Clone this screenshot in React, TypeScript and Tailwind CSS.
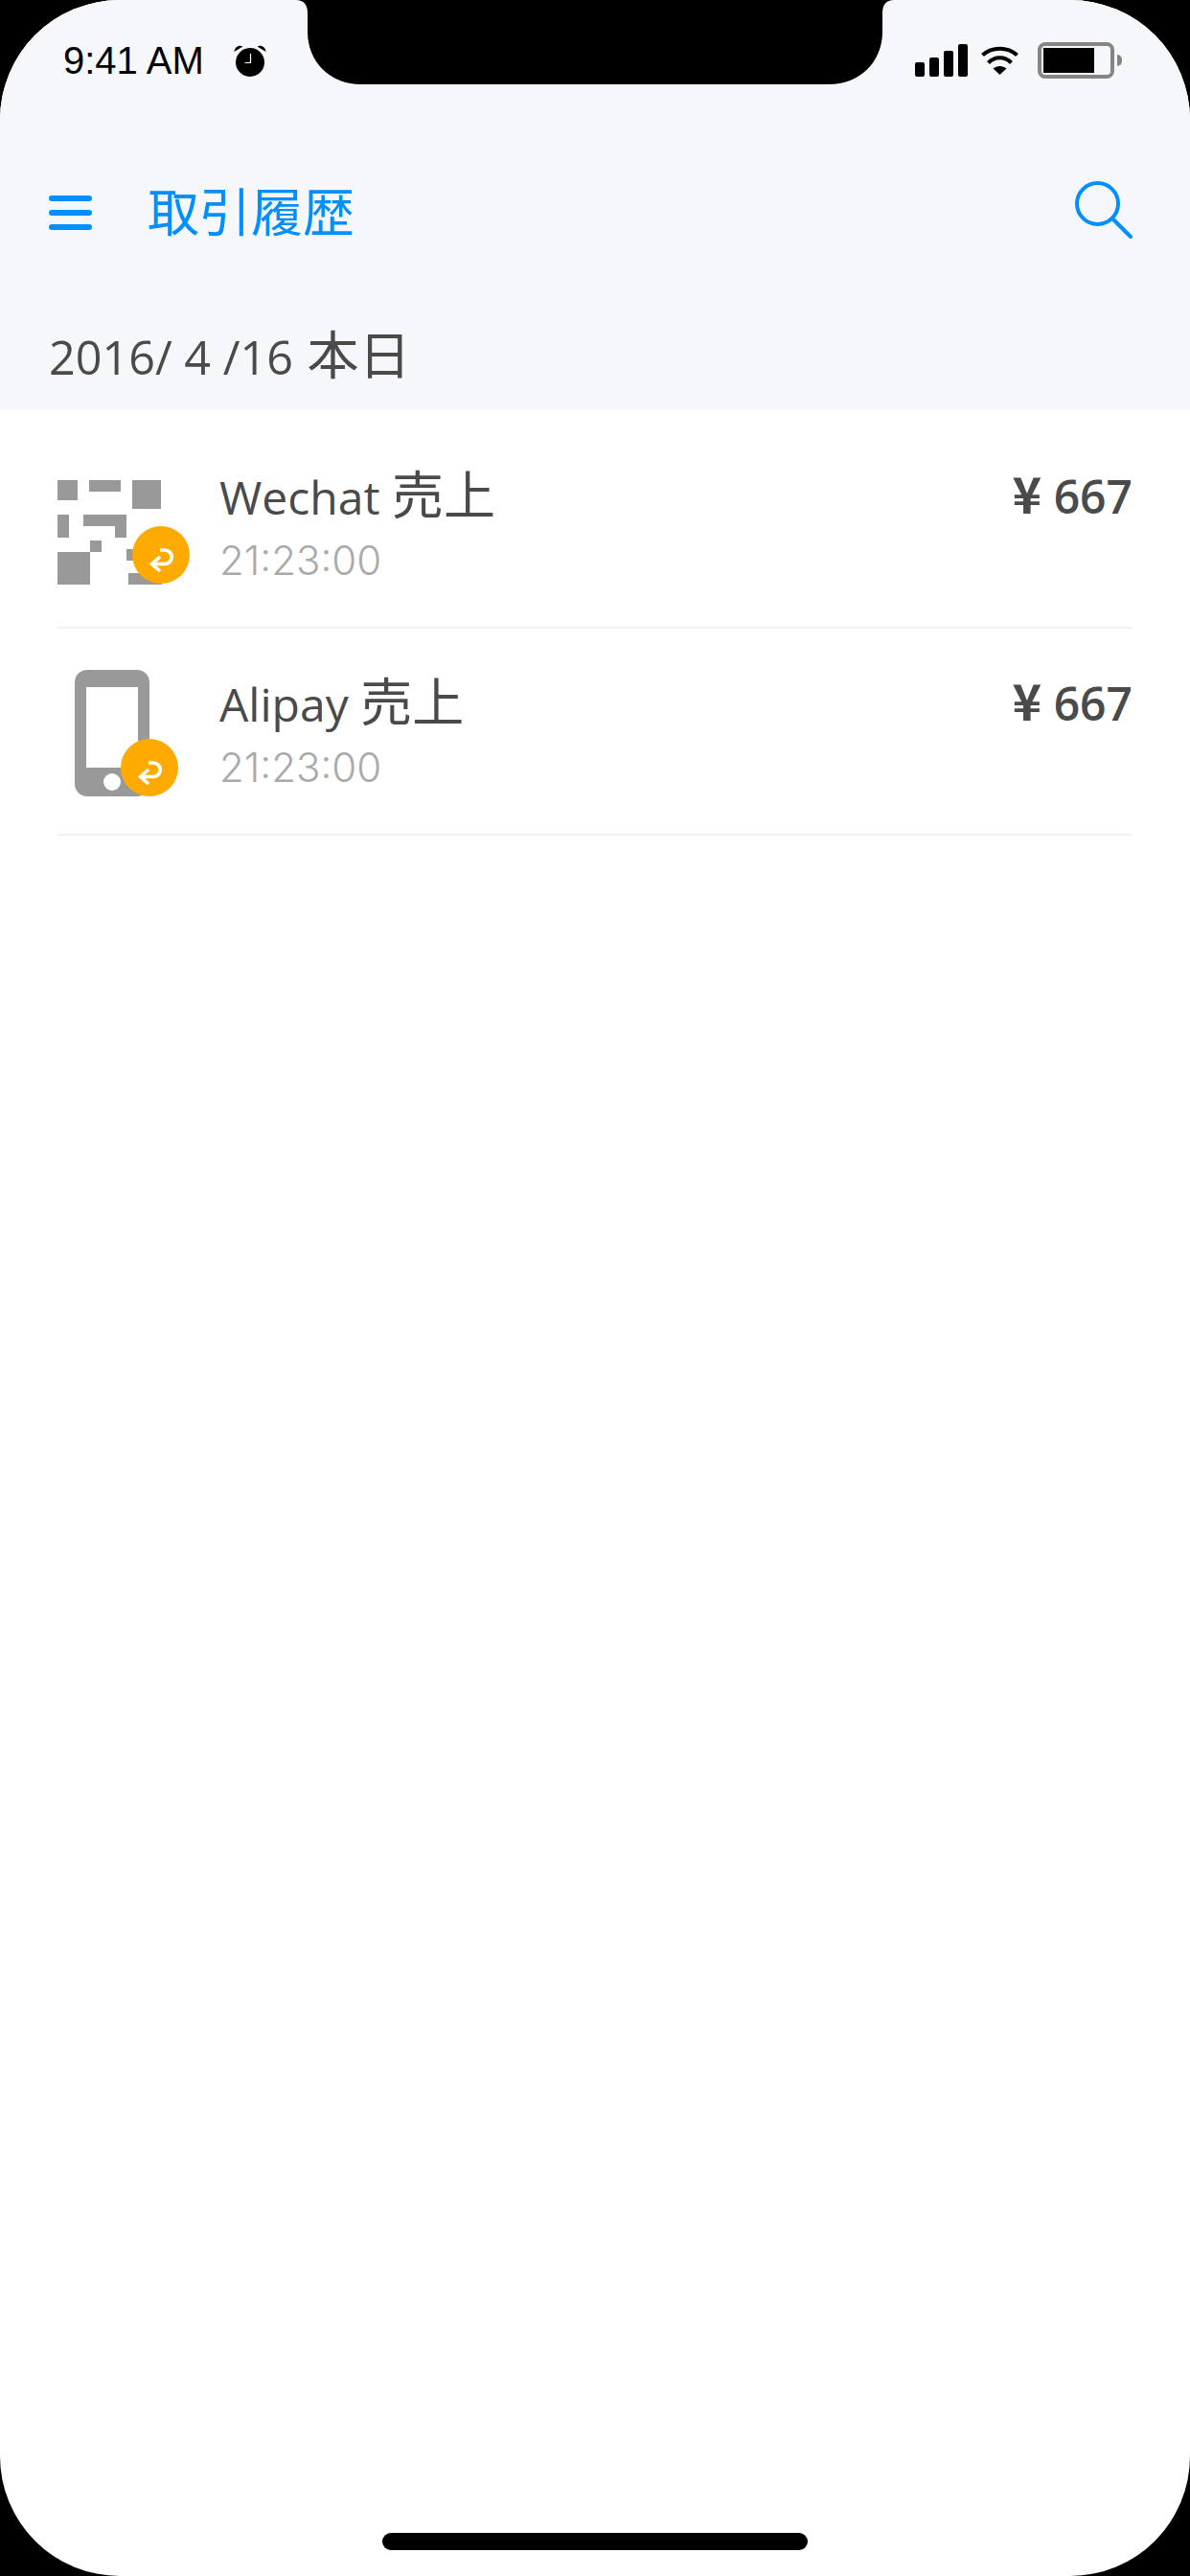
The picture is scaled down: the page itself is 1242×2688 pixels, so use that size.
const SANS = "font-['Open_Sans','Noto_Sans_CJK_JP',sans-serif]";

function ReturnBadge({ className }: { className: string }) {
  return (
    <svg className={`absolute ${className}`} width="60" height="60" viewBox="0 0 60 60">
      <circle cx="30" cy="30" r="30" fill="#ffaa00" />
      <path
        d="M29 32 L20.5 39.5 L29 47 M21 39.5 H34 a7.25 7.25 0 0 0 0 -14.5 H29"
        fill="none"
        stroke="#fff"
        strokeWidth="3.6"
      />
    </svg>
  );
}

function QrIcon() {
  return (
    <svg width="109" height="109" viewBox="60 501 109 109" fill="#999999">
      <rect x="60" y="501" width="21" height="21" />
      <rect x="93" y="501" width="33" height="12" />
      <rect x="138" y="501" width="30" height="30" />
      <rect x="60" y="537" width="12" height="24" />
      <rect x="87" y="537" width="45" height="12" />
      <rect x="120" y="549" width="12" height="12" />
      <rect x="94" y="564" width="12" height="12" />
      <rect x="60" y="576" width="34" height="34" />
      <rect x="132" y="573" width="13" height="12" />
      <rect x="134" y="598" width="35" height="12" />
    </svg>
  );
}

function PhoneIcon() {
  return (
    <svg width="78" height="132" viewBox="0 0 78 132">
      <rect width="78" height="132" rx="13" fill="#999999" />
      <rect x="12" y="18" width="54" height="84" fill="#fff" />
      <circle cx="39" cy="117" r="9" fill="#fff" />
    </svg>
  );
}

function AlarmIcon() {
  return (
    <svg width="36" height="36" viewBox="0 0 36 36">
      <circle cx="18" cy="20" r="15" fill="#000" />
      <path d="M1.5 9 C2 3.5 7 1.5 10.5 3.5 Z M34.5 9 C34 3.5 29 1.5 25.5 3.5 Z" fill="#000" />
      <path d="M18.5 11 V20.5 H12.5" fill="none" stroke="#fff" strokeWidth="1.2" />
    </svg>
  );
}

function SignalIcon() {
  return (
    <div className="flex items-end gap-[5px] h-[34px]">
      <div className="w-[10px] h-[15px] rounded-[2px] bg-black" />
      <div className="w-[10px] h-[20px] rounded-[2px] bg-black" />
      <div className="w-[10px] h-[27px] rounded-[2px] bg-black" />
      <div className="w-[10px] h-[34px] rounded-[2px] bg-black" />
    </div>
  );
}

function WifiIcon() {
  return (
    <svg width="39" height="30" viewBox="0 0 39 30">
      <path d="M19.5 30 L12.5 23.5 C16.5 20 22.5 20 26.5 23.5 Z" fill="#000" />
      <path d="M7.5 17.5 C14.5 10.5 24.5 10.5 31.5 17.5" fill="none" stroke="#000" strokeWidth="4.2" />
      <path d="M1.5 9.5 C11.5 0.5 27.5 0.5 37.5 9.5" fill="none" stroke="#000" strokeWidth="4.2" />
    </svg>
  );
}

function BatteryIcon() {
  return (
    <div className="flex items-center gap-[3px]">
      <div className="w-[80px] h-[38px] rounded-[8px] border-[4px] border-[#858585] p-[2px]">
        <div className="w-[53px] h-full bg-black" />
      </div>
      <div className="w-[5px] h-[12px] rounded-r-full bg-[#858585]" />
    </div>
  );
}

function TxRow({
  icon,
  name,
  time,
  amount,
}: {
  icon: React.ReactNode;
  name: string;
  time: string;
  amount: string;
}) {
  return (
    <div className="flex items-start h-[216px] pt-[43px] border-b-[2px] border-[#f2f2f2]">
      {icon}
      <div className="flex-1 mt-[2px]">
        <div className={`${SANS} text-[48px] leading-[62px] text-[#4a4a4a]`}>
          {name} <span className="text-[54px] leading-[62px]">売上</span>
        </div>
        <div className="font-['Inter',sans-serif] font-light text-[42px] leading-[50px] mt-[10px] text-[#aaaaaa]">
          {time}
        </div>
      </div>
      <div className={`${SANS} text-[48px] leading-[62px] font-semibold text-[#4a4a4a]`}>
        <span className="font-['Noto_Sans_CJK_JP',sans-serif] text-[52px] leading-[62px]">¥</span> {amount}
      </div>
    </div>
  );
}

export default function App() {
  return (
    <div className="relative w-[1242px] h-[2688px] bg-black overflow-hidden">
      <div className="w-full h-full rounded-[125px] bg-white overflow-hidden flex flex-col">
        <div className="h-[428px] bg-[#f6f7fb]">
          <div className="h-[88px] pt-[38px] pl-[66px] pr-[71px] flex items-center">
            <span className="font-['Liberation_Sans',sans-serif] text-[40px] text-black">9:41 AM</span>
            <div className="ml-[30px]">
              <AlarmIcon />
            </div>
            <div className="ml-auto flex items-center gap-[14px]">
              <SignalIcon />
              <WifiIcon />
              <div className="ml-[6px]">
                <BatteryIcon />
              </div>
            </div>
          </div>

          <div className="mt-[92px] h-[84px] pl-[51px] pr-[60px] flex items-center">
            <div className="flex flex-col gap-[9px] w-[45px]">
              <div className="h-[6px] rounded-full bg-[#008fff]" />
              <div className="h-[6px] rounded-full bg-[#008fff]" />
              <div className="h-[6px] rounded-full bg-[#008fff]" />
            </div>
            <span className="ml-[58px] -mt-[8px] font-['Noto_Sans_CJK_JP',sans-serif] text-[54px] text-[#008fff]">
              取引履歴
            </span>
            <svg className="ml-auto -mt-[6px]" width="60" height="60" viewBox="0 0 60 60">
              <circle cx="23.5" cy="23.5" r="21.5" fill="none" stroke="#008fff" strokeWidth="4" />
              <path d="M39 39 L58 58" stroke="#008fff" strokeWidth="4" strokeLinecap="round" />
            </svg>
          </div>

          <div className={`mt-[70px] pl-[51px] ${SANS} text-[48.5px] leading-[72px] text-[#4a4a4a]`}>
            2016/ 4 /16 <span className="ml-[2px] text-[54px] leading-[72px]">本日</span>
          </div>
        </div>

        <div className="pt-[12px] px-[60px] flex flex-col">
          <TxRow
            name="Wechat"
            time="21:23:00"
            amount="667"
            icon={
              <div className="relative w-[169px] h-[109px] mt-[18px]">
                <QrIcon />
                <ReturnBadge className="left-[78px] top-[48px]" />
              </div>
            }
          />
          <TxRow
            name="Alipay"
            time="21:23:00"
            amount="667"
            icon={
              <div className="relative w-[169px] h-[132px] pl-[18px]">
                <PhoneIcon />
                <ReturnBadge className="left-[66px] top-[72px]" />
              </div>
            }
          />
        </div>
      </div>

      <svg className="absolute left-0 top-0" width="1242" height="88" viewBox="0 0 1242 88">
        <path
          d="M309 0 Q321 0 321 14 V33 C321 65 345 88 377 88 H865 C897 88 921 65 921 33 V14 Q921 0 933 0 Z"
          fill="#000"
        />
      </svg>
      <div className="absolute left-[399px] top-[2643px] w-[444px] h-[18px] rounded-full bg-black" />
    </div>
  );
}
